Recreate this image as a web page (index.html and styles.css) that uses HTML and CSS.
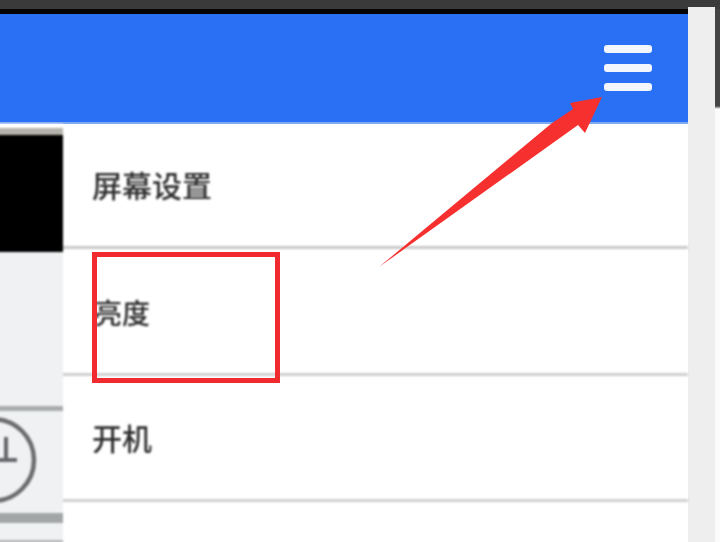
FILE: index.html
```html
<!DOCTYPE html>
<html lang="zh">
<head>
<meta charset="utf-8">
<title>屏幕设置</title>
<link rel="stylesheet" href="styles.css">
</head>
<body>
<div class="stage">
  <div class="topline"></div>
  <div class="frame">
    <div class="app">
      <div class="blackline"></div>
      <header class="appbar">
        <div class="burger"><span></span><span></span><span></span></div>
      </header>
      <div class="content">
        <aside class="side">
          <div class="side-gap"></div>
          <div class="side-shade"></div>
          <div class="side-black"></div>
          <div class="side-fill"></div>
          <div class="side-line"></div>
          <svg class="clock" width="66" height="102" viewBox="-3 0 66 102" aria-hidden="true">
            <circle cx="-7" cy="49" r="41" fill="none" stroke="#6a6c6e" stroke-width="4.5"/>
            <path d="M6 26V49M-4 49H17" fill="none" stroke="#65676a" stroke-width="4"/>
          </svg>
          <div class="side-bar"></div>
          <div class="side-fill2"></div>
          <div class="side-line2"></div>
        </aside>
        <ul class="menu">
          <li class="row row-a">屏幕设置</li>
          <li class="row row-b">亮度</li>
          <li class="row row-c">开机</li>
        </ul>
      </div>
    </div>
    <div class="rail"></div>
  </div>
  <div class="highlight"></div>
  <svg class="arrow" width="720" height="542" viewBox="0 0 720 542" aria-hidden="true">
    <path d="M379 267L552 123L573 109L570 103L602 97L585 133L578 125Z" fill="#f5302f"/>
  </svg>
</div>
</body>
</html>
```
FILE: styles.css
```css
* { box-sizing: border-box; }
html, body { margin: 0; padding: 0; background: #fff; }
.stage {
  position: relative;
  width: 720px;
  height: 542px;
  overflow: hidden;
  display: flex;
  flex-direction: column;
  font-family: "Noto Sans CJK SC", "Liberation Sans", sans-serif;
}
.topline { height: 9px; background: #3a3a3a; flex: none; }
.frame { flex: 1; display: flex; min-height: 0; padding-right: 5px; background: linear-gradient(#444 0, #444 97px, #fbfbfb 100px); }
.app { width: 688px; display: flex; flex-direction: column; background: #fff; }
.blackline { height: 5px; background: #050505; flex: none; }
.appbar {
  height: 110px;
  flex: none;
  background: #2a70f5;
  border-bottom: 2px solid #7fa9f3;
  display: flex;
  justify-content: flex-end;
  align-items: flex-start;
  padding: 31px 36px 0 0;
}
.burger { width: 48px; display: flex; flex-direction: column; gap: 11px; filter: blur(0.5px); }
.burger span { height: 8px; border-radius: 3px; background: #f3f6fc; }
.content { flex: 1; display: flex; min-height: 0; margin-left: -3px; filter: blur(0.8px); }
.side { width: 66px; flex: none; display: flex; flex-direction: column; background: #eff1f3; }
.side-gap { height: 4px; flex: none; background: #fff; }
.side-shade { height: 7px; flex: none; background: #b5b3ab; }
.side-black { height: 117px; flex: none; background: #000; }
.side-fill { height: 154px; flex: none; }
.side-line { height: 5px; flex: none; background: #a9acad; }
.clock { display: block; flex: none; height: 102px; }
.side-bar { height: 10px; flex: none; background: #a3a6a6; }
.side-fill2 { height: 17px; flex: none; }
.side-line2 { height: 3px; flex: none; background: #b5b7b8; }
.menu { flex: 1; list-style: none; margin: 0; padding: 0; }
.row {
  display: flex;
  align-items: center;
  padding-left: 29px;
  font-size: 30px;
  font-weight: 500;
  line-height: 1;
  color: #2e2e2e;
  border-bottom: 3px solid #c9c9c9;
}
.row-a { height: 125px; padding-bottom: 2px; }
.row-b { height: 127px; padding-left: 31px; padding-top: 2px; font-size: 28px; border-bottom-color: #cfcfcf; }
.row-c { height: 126px; padding-bottom: 2px; border-bottom-color: #cfcfcf; }
.rail { width: 27px; flex: none; background: #eeeeee; margin-top: -2px; }
.highlight {
  position: absolute;
  left: 92px;
  top: 252px;
  width: 188px;
  height: 131px;
  border: 5px solid #f02a2f;
  filter: blur(0.5px);
}
.arrow { position: absolute; left: 0; top: 0; filter: blur(0.5px); }
```
